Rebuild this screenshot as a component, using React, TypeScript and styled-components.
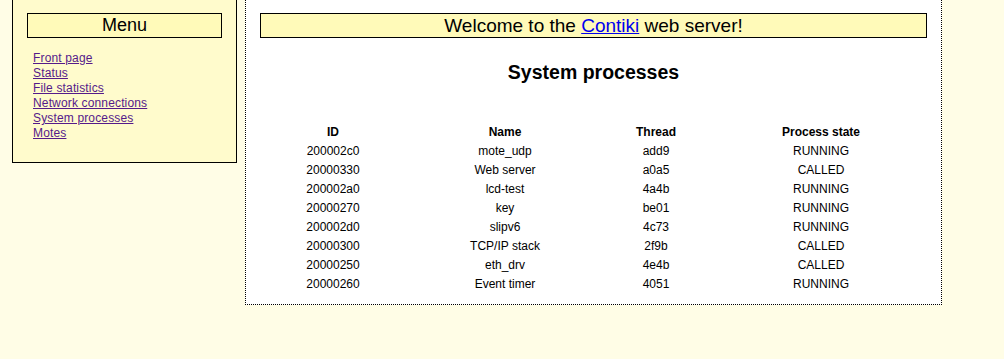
import React from 'react';
import styled, { createGlobalStyle } from 'styled-components';

interface Process {
  id: string;
  name: string;
  thread: string;
  state: string;
}

const processes: Process[] = [
  { id: '200002c0', name: 'mote_udp', thread: 'add9', state: 'RUNNING' },
  { id: '20000330', name: 'Web server', thread: 'a0a5', state: 'CALLED' },
  { id: '200002a0', name: 'lcd-test', thread: '4a4b', state: 'RUNNING' },
  { id: '20000270', name: 'key', thread: 'be01', state: 'RUNNING' },
  { id: '200002d0', name: 'slipv6', thread: '4c73', state: 'RUNNING' },
  { id: '20000300', name: 'TCP/IP stack', thread: '2f9b', state: 'CALLED' },
  { id: '20000250', name: 'eth_drv', thread: '4e4b', state: 'CALLED' },
  { id: '20000260', name: 'Event timer', thread: '4051', state: 'RUNNING' },
];

const menuLinks = [
  'Front page',
  'Status',
  'File statistics',
  'Network connections',
  'System processes',
  'Motes',
];

const GlobalStyle = createGlobalStyle`
  html, body {
    margin: 0;
    padding: 0;
    background: #fffde6;
    font-family: "Liberation Sans", Arial, sans-serif;
    color: #000;
  }
`;

// page layout
const Page = styled.div`
  display: flex;
  align-items: flex-start;
  gap: 8px;
  padding-left: 12px;
`;

const MenuBox = styled.div`
  box-sizing: border-box;
  width: 225px;
  padding: 13px 14px 21px;
  background: #fffbcc;
  border: 1px solid #000;
  border-top: none;
`;

const TitleBox = styled.div<{ $size: number }>`
  height: 23px;
  line-height: 23px;
  background: #fffab9;
  border: 1px solid #000;
  text-align: center;
  font-size: ${(p) => p.$size}px;
`;

const LinkList = styled.ul`
  list-style: none;
  margin: 13px 0 0;
  padding: 0 0 0 6px;
`;

const MenuLink = styled.a`
  display: block;
  font-size: 12px;
  line-height: 15px;
  letter-spacing: 0.15px;
  color: #551a8b;
  text-decoration: underline;
  width: fit-content;
`;

const MainBox = styled.div`
  box-sizing: border-box;
  width: 697px;
  padding: 13px 14px 10px;
  background: #fff;
  border: 1px dotted #000;
  border-top: none;
`;

const Contiki = styled.a`
  color: #0000ee;
  text-decoration: underline;
`;

const Heading = styled.h1`
  margin: 23px 0 39px;
  font-size: 19.5px;
  line-height: 23px;
  font-weight: bold;
  text-align: center;
`;

const Table = styled.div`
  display: grid;
  grid-template-columns: 140px 204px 98px 232px;
  margin-left: 3px;
  font-size: 12px;
`;

const Cell = styled.div<{ $head?: boolean }>`
  height: 19px;
  line-height: 19px;
  text-align: center;
  font-weight: ${(p) => (p.$head ? 'bold' : 'normal')};
`;

const App: React.FC = () => {
  return (
    <>
      <GlobalStyle />
      <Page>
        <MenuBox>
          <TitleBox $size={18}>Menu</TitleBox>
          <LinkList>
            {menuLinks.map((l) => (
              <li key={l}>
                <MenuLink href="#">{l}</MenuLink>
              </li>
            ))}
          </LinkList>
        </MenuBox>

        <MainBox>
          <TitleBox $size={19}>
            Welcome to the <Contiki href="#">Contiki</Contiki> web server!
          </TitleBox>
          <Heading>System processes</Heading>
          <Table>
            <Cell $head>ID</Cell>
            <Cell $head>Name</Cell>
            <Cell $head>Thread</Cell>
            <Cell $head>Process state</Cell>
            {processes.map((p) => (
              <React.Fragment key={p.id}>
                <Cell>{p.id}</Cell>
                <Cell>{p.name}</Cell>
                <Cell>{p.thread}</Cell>
                <Cell>{p.state}</Cell>
              </React.Fragment>
            ))}
          </Table>
        </MainBox>
      </Page>
    </>
  );
};

export default App;
